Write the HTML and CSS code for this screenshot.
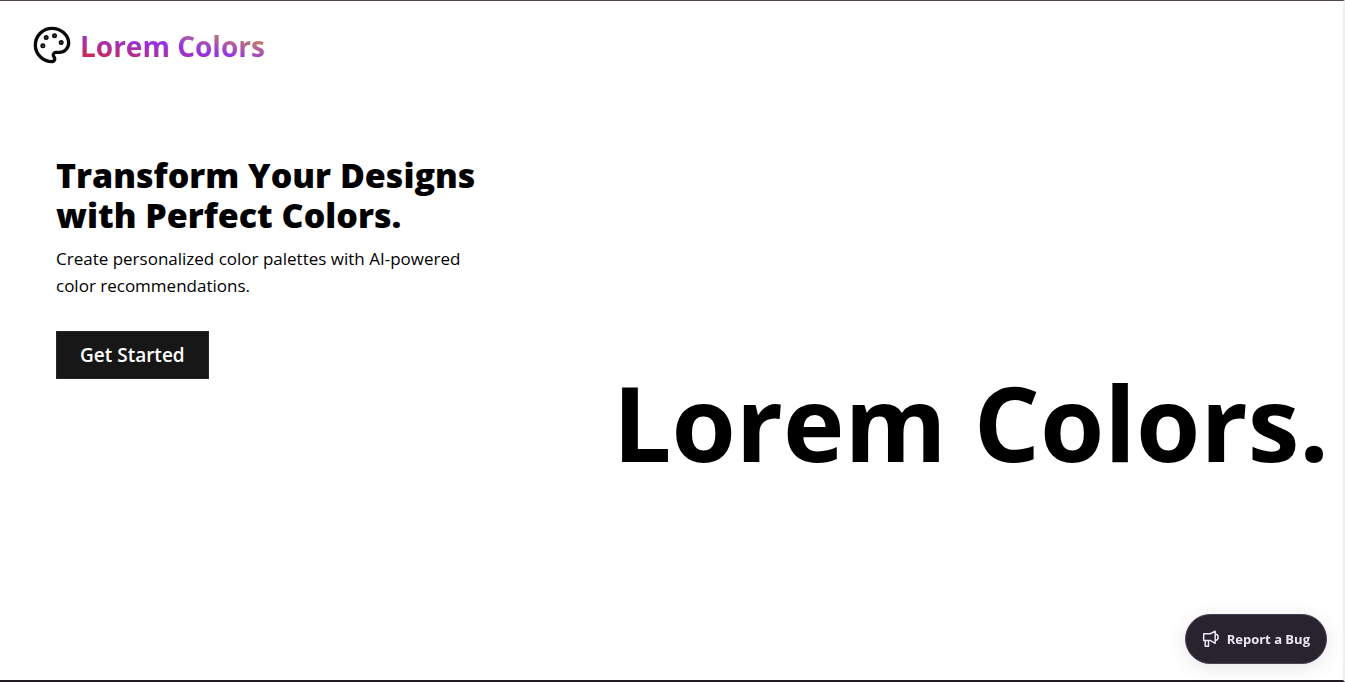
FILE: index.html
```html
<!DOCTYPE html>
<html lang="en">
<head>
<meta charset="utf-8">
<meta name="viewport" content="width=device-width, initial-scale=1">
<title>Lorem Colors</title>
<link rel="stylesheet" href="styles.css">
</head>
<body>
<div class="page">
  <header class="header">
    <a class="brand" href="#">
      <svg class="brand-icon" viewBox="0 0 24 24" fill="none" stroke="currentColor" stroke-width="2" stroke-linecap="round" stroke-linejoin="round" aria-hidden="true">
        <circle cx="13.5" cy="6.5" r=".5" fill="currentColor"/>
        <circle cx="17.5" cy="10.5" r=".5" fill="currentColor"/>
        <circle cx="8.5" cy="7.5" r=".5" fill="currentColor"/>
        <circle cx="6.5" cy="12.5" r=".5" fill="currentColor"/>
        <path d="M12 2C6.5 2 2 6.5 2 12s4.5 10 10 10c.926 0 1.648-.746 1.648-1.688 0-.437-.18-.835-.437-1.125-.29-.289-.438-.652-.438-1.125a1.64 1.64 0 0 1 1.668-1.668h1.996c3.051 0 5.555-2.503 5.555-5.554C21.965 6.012 17.461 2 12 2z"/>
      </svg>
      <span class="brand-name">Lorem Colors</span>
    </a>
  </header>
  <main class="hero">
    <section class="intro">
      <h1 class="headline">Transform Your Designs with Perfect Colors.</h1>
      <p class="lead">Create personalized color palettes with AI-powered color recommendations.</p>
      <button class="start" type="button">Get Started</button>
    </section>
    <p class="wordmark">Lorem Colors.</p>
  </main>
  <button class="report" type="button">
    <svg class="report-icon" viewBox="0 0 18 18" fill="none" stroke="currentColor" stroke-width="1.5" stroke-linejoin="round" aria-hidden="true">
      <path d="M1.700 3.700h6.500l5-2.400v12l-5-2.900h-6.500z"/>
      <path d="M3.200 10.400v5.800h3.300v-5.800"/>
      <path d="M13.200 4c1.800.3 3 1.600 3 3.300s-1.200 3-3 3.300"/>
    </svg>
    Report a Bug
  </button>
</div>
</body>
</html>
```

FILE: styles.css
```css
* {
  box-sizing: border-box;
}

body {
  margin: 0;
  font-family: "Segoe UI", "Open Sans", "Noto Sans", sans-serif;
  color: #000;
  background: #fff;
}

.page {
  display: flex;
  flex-direction: column;
  min-height: 100vh;
  border-top: 1px solid #51434f;
  border-right: 2px solid #f0f0f0;
  border-bottom: 2px solid #1f1c22;
}

.header {
  padding: 24px 32px;
}

.brand {
  display: inline-flex;
  align-items: center;
  gap: 8px;
  color: #0a0a0a;
  text-decoration: none;
}

.brand-icon {
  width: 40px;
  height: 40px;
}

.brand-name {
  padding-top: 2px;
  font-size: 28px;
  line-height: 36px;
  font-weight: 700;
  color: transparent;
  background: linear-gradient(to top right, #dc2626, #9333ea, #eab308);
  background-clip: text;
  -webkit-background-clip: text;
}

.hero {
  flex: 1;
  display: grid;
  grid-template-columns: 432px 1fr;
  padding: 61px 14px 0 56px;
}

.headline {
  margin: 0;
  font-size: 34px;
  line-height: 40px;
  font-weight: 800;
}

.lead {
  margin: 10px 0 32px;
  font-size: 17px;
  line-height: 27px;
}

.start {
  padding: 0 23px;
  height: 48px;
  border: 1px solid #262626;
  background: #171717;
  color: #fff;
  font: inherit;
  font-size: 19px;
  font-weight: 600;
}

.wordmark {
  justify-self: end;
  margin: 192px 0 0;
  font-size: 104px;
  line-height: 150px;
  font-weight: 700;
  white-space: nowrap;
}

.report {
  position: fixed;
  right: 18px;
  bottom: 18px;
  display: flex;
  align-items: center;
  gap: 7px;
  height: 50px;
  padding: 0 16px;
  border: 1px solid #49424f;
  border-radius: 25px;
  background: #29232f;
  color: #ebe4f2;
  font: inherit;
  font-size: 13px;
  font-weight: 700;
  box-shadow: 0 4px 20px rgba(0, 0, 0, 0.1);
}

.report-icon {
  width: 18px;
  height: 18px;
}
```
